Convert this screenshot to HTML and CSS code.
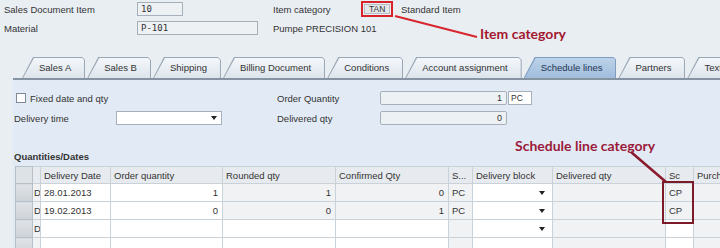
FILE: index.html
```html
<!DOCTYPE html>
<html lang="en">
<head>
    <meta charset="UTF-8">
    <title>Sales Document Item - Schedule lines</title>
    <link rel="stylesheet" href="styles.css">
</head>
<body>
<div class="screen">
    <div class="head">
        <span class="lbl">Sales Document Item</span>
        <span class="fld w46">10</span>
        <span class="lbl">Item category</span>
        <span class="mark"><span class="fld small">TAN</span></span>
        <span class="lbl">Standard Item</span>
        <span class="lbl">Material</span>
        <span class="fld w121">P-101</span>
        <span class="lbl wide">Pumpe PRECISION 101</span>
    </div>

    <div class="tabs">
        <div class="tab"><span>Sales A</span></div>
        <div class="tab"><span>Sales B</span></div>
        <div class="tab"><span>Shipping</span></div>
        <div class="tab"><span>Billing Document</span></div>
        <div class="tab"><span>Conditions</span></div>
        <div class="tab"><span>Account assignment</span></div>
        <div class="tab active"><span>Schedule lines</span></div>
        <div class="tab"><span>Partners</span></div>
        <div class="tab"><span>Texts</span></div>
    </div>

    <div class="panel">
        <div class="form">
            <label class="chk"><span class="box"></span>Fixed date and qty</label>
            <span class="lbl c4">Order Quantity</span>
            <span class="fld num">1</span>
            <span class="fld unit">PC</span>

            <span class="lbl">Delivery time</span>
            <span class="drop"><i class="arr"></i></span>
            <span></span>
            <span class="lbl">Delivered qty</span>
            <span class="fld num">0</span>
        </div>

        <div class="sect">Quantities/Dates</div>

        <table class="grid">
            <colgroup>
                <col style="width:17px"><col style="width:8px"><col style="width:70px"><col style="width:112px">
                <col style="width:113px"><col style="width:113px"><col style="width:24px"><col style="width:80px">
                <col style="width:113px"><col style="width:28px"><col style="width:40px">
            </colgroup>
            <thead>
                <tr>
                    <th class="sel"></th><th class="st"></th><th>Delivery Date</th><th>Order quantity</th>
                    <th>Rounded qty</th><th>Confirmed Qty</th><th>S...</th><th>Delivery block</th>
                    <th>Delivered qty</th><th>Sc</th><th>Purch. Req.</th>
                </tr>
            </thead>
            <tbody>
                <tr>
                    <td class="sel"></td><td class="st">D</td><td class="w">28.01.2013</td><td class="w r">1</td>
                    <td class="r">1</td><td class="r">0</td><td>PC</td><td class="w dd"><i class="arr"></i></td>
                    <td></td><td>CP</td><td></td>
                </tr>
                <tr>
                    <td class="sel"></td><td class="st">D</td><td class="w">19.02.2013</td><td class="w r">0</td>
                    <td class="r">0</td><td class="r">1</td><td>PC</td><td class="w dd"><i class="arr"></i></td>
                    <td></td><td>CP</td><td></td>
                </tr>
                <tr>
                    <td class="sel"></td><td class="st">D</td><td class="w"></td><td class="w"></td>
                    <td class="w"></td><td class="w"></td><td></td><td class="w dd"><i class="arr"></i></td>
                    <td></td><td class="w"></td><td></td>
                </tr>
                <tr>
                    <td class="sel"></td><td class="st"></td><td class="w"></td><td class="w"></td>
                    <td class="w"></td><td class="w"></td><td></td><td class="w"></td>
                    <td></td><td class="w"></td><td></td>
                </tr>
            </tbody>
        </table>
    </div>

    <div class="note note-item">Item category</div>
    <div class="note note-sched">Schedule line category</div>

    <svg class="overlay" width="720" height="248" viewBox="0 0 720 248">
        <line x1="395" y1="16" x2="477" y2="37" stroke="#d8262e" stroke-width="2"/>
        <line x1="631" y1="152" x2="666" y2="182" stroke="#8a1b2c" stroke-width="2.5"/>
        <rect x="663" y="182" width="30" height="41" fill="none" stroke="#7b1a28" stroke-width="2"/>
    </svg>
</div>
</body>
</html>
```

FILE: styles.css
```css
*{
    box-sizing: border-box;
}
body{
    margin: 0;
    background: #e9eef3;
    font-family: "Liberation Sans", Arial, sans-serif;
    font-size: 9.5px;
    color: #333;
}
.screen{
    position: relative;
    width: 720px;
    height: 248px;
    overflow: hidden;
}

/* header fields */
.head{
    display: grid;
    grid-template-columns: 133px 136px 87px 41px auto;
    grid-template-rows: 16px 14px;
    row-gap: 4px;
    align-items: center;
    padding: 1px 0 0 4px;
}
.lbl{
    white-space: nowrap;
}
.wide{
    grid-column: 3 / 6;
}
.fld{
    display: block;
    height: 14px;
    line-height: 12px;
    border: 1px solid #a6b0bb;
    background: #eef1f4;
    font-family: "DejaVu Sans Mono", "Liberation Mono", monospace;
    font-size: 9px;
    padding-left: 3px;
    color: #333;
}
.w46{ width: 46px; }
.w121{ width: 121px; }
.mark{
    justify-self: start;
    margin-left: 1px;
    border: 2px solid #d9232b;
    padding: 1px;
    height: 16px;
    display: flex;
    align-items: center;
}
.fld.small{
    width: 26px;
    height: 10px;
    line-height: 8px;
    font-family: "Liberation Sans", Arial, sans-serif;
    font-size: 8.5px;
    padding-left: 4px;
    border-color: #b6bec7;
    background: #e4e7ea;
}

/* tab strip */
.tabs{
    display: flex;
    gap: 2px;
    margin-top: 22px;
    padding-left: 22px;
    height: 21px;
    overflow: hidden;
}
.tab{
    flex: none;
    padding: 1px 1px 0 1px;
    background: #9aa8b6;
    clip-path: polygon(11px 0, calc(100% - 3px) 0, 100% 3px, 100% 100%, 0 100%);
}
.tab span{
    display: block;
    height: 20px;
    line-height: 20px;
    padding: 0 13px 0 16px;
    background: linear-gradient(#f4f7fa, #dce4ec);
    clip-path: polygon(11px 0, calc(100% - 2px) 0, 100% 2px, 100% 100%, 0 100%);
    white-space: nowrap;
}
.tab.active{
    background: #7f9dbf;
}
.tab.active span{
    background: linear-gradient(#bcd2e8, #a0bddd);
    color: #1f3550;
}

/* panel */
.panel{
    margin-left: 13px;
    border-top: 2px solid #8593a3;
    background: #e2ebf5;
    height: 170px;
    padding: 11px 0 0 1px;
}
.form{
    display: grid;
    grid-template-columns: 102px 106px 55px 103px 127px 24px;
    grid-template-rows: 14px 14px;
    row-gap: 6px;
    align-items: center;
}
.chk{
    grid-column: 1 / 4;
    display: flex;
    align-items: center;
}
.box{
    width: 10px;
    height: 10px;
    margin: 0 4px 0 2px;
    border: 1px solid #7f8a96;
    background: #fff;
}
.c4{
    grid-column: 4;
}
.fld.num{
    font-family: "Liberation Sans", Arial, sans-serif;
    text-align: right;
    padding-right: 4px;
    border-radius: 2px;
}
.fld.unit{
    margin-left: 1px;
    width: 24px;
    background: #fff;
    font-family: "Liberation Sans", Arial, sans-serif;
    font-size: 8.5px;
    padding-left: 2px;
}
.drop{
    height: 14px;
    border: 1px solid #a6b0bb;
    background: #fff;
    display: flex;
    align-items: center;
    justify-content: flex-end;
    padding-right: 4px;
}
.arr{
    display: block;
    width: 0;
    height: 0;
    border-left: 3px solid transparent;
    border-right: 3px solid transparent;
    border-top: 4px solid #222;
}
.sect{
    margin-top: 26px;
    height: 11px;
    line-height: 11px;
    font-weight: bold;
}

/* table */
.grid{
    margin-top: 4px;
    margin-left: 1px;
    border-collapse: collapse;
    table-layout: fixed;
    width: 718px;
}
.grid th, .grid td{
    border: 1px solid #c9d1d9;
    padding: 0 3px;
    white-space: nowrap;
    overflow: hidden;
    text-align: left;
    font-weight: normal;
}
.grid th{
    height: 17px;
    background: #e7ebef;
}
.grid td{
    height: 18px;
    background: #f0f2f4;
}
.grid .st{
    padding: 0 0 0 1px;
}
.grid td.w{
    background: #fff;
}
.grid td.r{
    text-align: right;
    padding-right: 4px;
}
.grid .sel{
    background: linear-gradient(#dfe3e7, #cdd2d8);
    border-color: #b7c0c9;
}
.grid th.sel{
    background: #dde2e7;
}
.grid td.dd .arr{
    margin-left: auto;
    margin-right: 4px;
}

/* callouts */
.note{
    position: absolute;
    font-family: Lato, "Open Sans", sans-serif;
    font-weight: bold;
    font-size: 14px;
    line-height: 15px;
    white-space: nowrap;
}
.note-item{
    left: 480px;
    top: 26px;
    color: #a3192f;
}
.note-sched{
    left: 515px;
    top: 138px;
    color: #9a1a3a;
}
.overlay{
    position: absolute;
    left: 0;
    top: 0;
    pointer-events: none;
}
```
